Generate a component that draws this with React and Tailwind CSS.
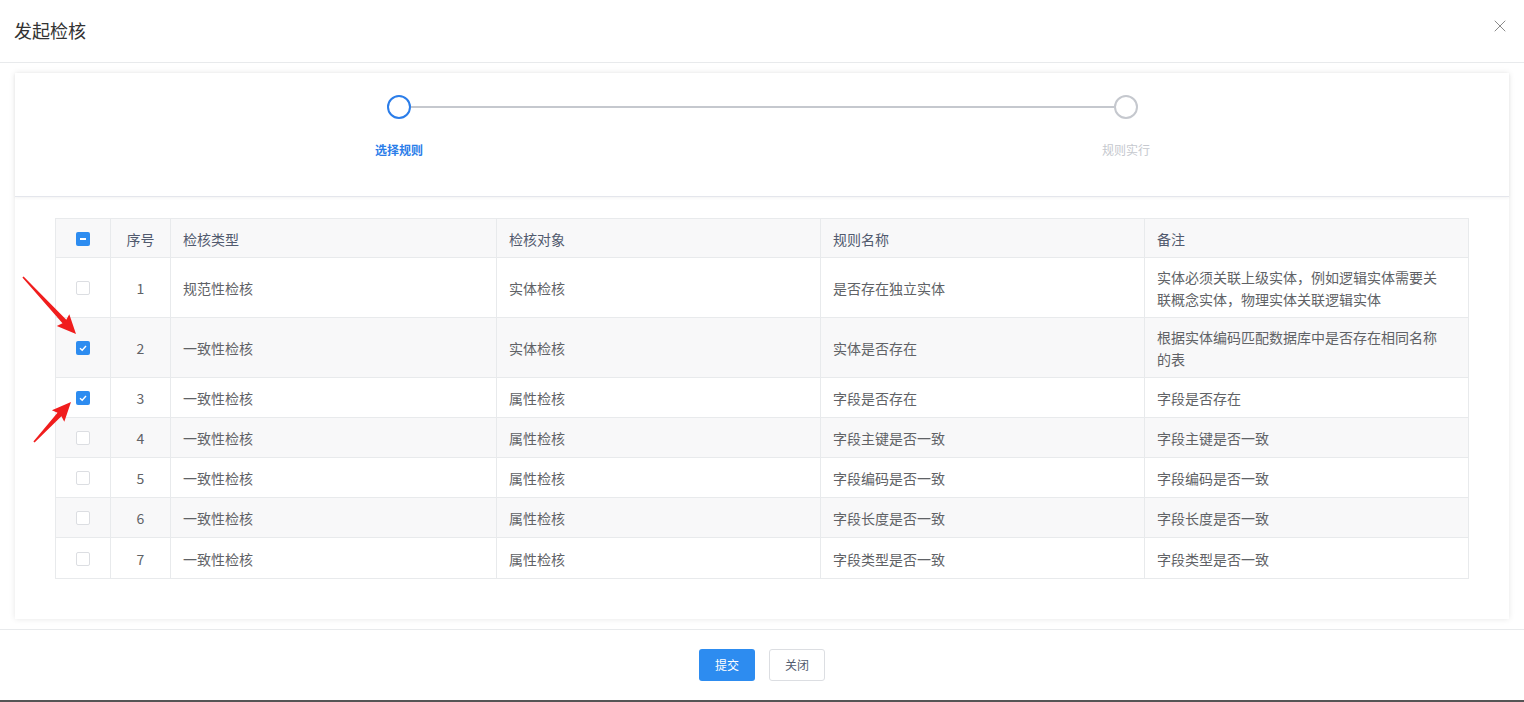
import { X } from 'lucide-react'

const FONT = { fontFamily: '"Noto Sans CJK SC", "Noto Sans", sans-serif' }

const rows = [
  { id: 1, type: '规范性检核', target: '实体检核', rule: '是否存在独立实体', note: '实体必须关联上级实体，例如逻辑实体需要关联概念实体，物理实体关联逻辑实体', checked: false },
  { id: 2, type: '一致性检核', target: '实体检核', rule: '实体是否存在', note: '根据实体编码匹配数据库中是否存在相同名称的表', checked: true },
  { id: 3, type: '一致性检核', target: '属性检核', rule: '字段是否存在', note: '字段是否存在', checked: true },
  { id: 4, type: '一致性检核', target: '属性检核', rule: '字段主键是否一致', note: '字段主键是否一致', checked: false },
  { id: 5, type: '一致性检核', target: '属性检核', rule: '字段编码是否一致', note: '字段编码是否一致', checked: false },
  { id: 6, type: '一致性检核', target: '属性检核', rule: '字段长度是否一致', note: '字段长度是否一致', checked: false },
  { id: 7, type: '一致性检核', target: '属性检核', rule: '字段类型是否一致', note: '字段类型是否一致', checked: false },
]

function Checkbox({ state }) {
  if (state === 'checked') {
    return (
      <span className="w-[14px] h-[14px] rounded-[2px] bg-[#2d8cf0] flex items-center justify-center">
        <svg width="10" height="10" viewBox="0 0 10 10">
          <polyline points="2,5.2 4.2,7.2 8,3" fill="none" stroke="#fff" strokeWidth="1.4" />
        </svg>
      </span>
    )
  }
  if (state === 'partial') {
    return (
      <span className="w-[14px] h-[14px] rounded-[2px] bg-[#2d8cf0] flex items-center justify-center">
        <span className="w-[6px] h-[2px] bg-white" />
      </span>
    )
  }
  return <span className="w-[14px] h-[14px] rounded-[2px] border border-[#dcdee2] bg-white" />
}

// tapered arrow polygon from (x1,y1) to tip (x2,y2)
function arrowPoints(x1, y1, x2, y2) {
  const len = Math.hypot(x2 - x1, y2 - y1)
  const ux = (x2 - x1) / len
  const uy = (y2 - y1) / len
  const nx = -uy
  const ny = ux
  const head = 17
  const headW = 8.5
  const shaftW = 2.6
  const bx = x2 - ux * head
  const by = y2 - uy * head
  const p = [
    [x1 + nx * 0.8, y1 + ny * 0.8],
    [bx + nx * shaftW, by + ny * shaftW],
    [bx + nx * headW - ux * 2, by + ny * headW - uy * 2],
    [x2, y2],
    [bx - nx * headW - ux * 2, by - ny * headW - uy * 2],
    [bx - nx * shaftW, by - ny * shaftW],
    [x1 - nx * 0.8, y1 - ny * 0.8],
  ]
  return p.map(([a, b]) => `${a.toFixed(1)},${b.toFixed(1)}`).join(' ')
}

const cols = [
  'w-[55px] justify-center',
  'w-[60px] justify-center',
  'w-[326px] px-3',
  'w-[324px] px-3',
  'w-[324px] px-3',
  'w-[323px] pl-3 pr-[30px]',
]

function Cell({ i, children, last }) {
  return (
    <div className={`${cols[i]} shrink-0 flex items-center pt-[8px] pb-[7px] leading-[22px] ${last ? '' : 'border-r border-[#e8eaec]'}`}>
      {children}
    </div>
  )
}

export default function App() {
  return (
    <div className="relative w-[1524px] h-[702px] bg-white flex flex-col overflow-hidden" style={FONT}>
      {/* header */}
      <div className="h-[63px] shrink-0 flex items-center justify-between pl-[14px] pr-[14px] border-b border-[#e8eaec]">
        <span className="text-[18px] text-[#333] pb-[2px]">发起检核</span>
        <X size={20} strokeWidth={1.2} className="text-[#8a8a8a] -mt-[10px]" />
      </div>

      {/* body */}
      <div className="flex-1 px-[15px] pt-[10px] pb-[10px] border-b border-[#e8eaec]">
        <div className="h-full bg-white shadow-[0_0_6px_rgba(0,0,0,0.1)] flex flex-col">
          {/* steps */}
          <div className="h-[124px] shrink-0 border-b border-[#e4e6ec] shadow-[0_1px_3px_rgba(0,0,0,0.05)] pt-[22px] pl-[372px] flex items-start">
            <div className="w-6 flex flex-col items-center">
              <span className="w-6 h-6 rounded-full border-2 border-[#2b7de9] bg-white" />
              <span className="mt-[22px] whitespace-nowrap text-[12px] font-bold text-[#2b7de9]">选择规则</span>
            </div>
            <div className="w-[703px] h-[2px] bg-[#c5c8ce] mt-[11px]" />
            <div className="w-6 flex flex-col items-center">
              <span className="w-6 h-6 rounded-full border-2 border-[#c5c8ce] bg-white" />
              <span className="mt-[22px] whitespace-nowrap text-[12px] text-[#c5c8ce]">规则实行</span>
            </div>
          </div>

          {/* table */}
          <div className="pt-[21px] pl-[40px]">
            <div className="w-[1414px] border border-[#e8eaec] text-[14px] text-[#606266]">
              <div className="flex bg-[#f8f8f9] border-b border-[#e8eaec] text-[#515a6e] min-h-[39px]">
                <Cell i={0}><Checkbox state="partial" /></Cell>
                <Cell i={1}>序号</Cell>
                <Cell i={2}>检核类型</Cell>
                <Cell i={3}>检核对象</Cell>
                <Cell i={4}>规则名称</Cell>
                <Cell i={5} last>备注</Cell>
              </div>
              {rows.map((r, idx) => (
                <div
                  key={r.id}
                  className={`flex min-h-[40px] ${idx === rows.length - 1 ? '' : 'border-b border-[#e8eaec]'} ${idx % 2 === 1 ? 'bg-[#f8f8f9]' : 'bg-white'}`}
                >
                  <Cell i={0}><Checkbox state={r.checked ? 'checked' : 'none'} /></Cell>
                  <Cell i={1}>{r.id}</Cell>
                  <Cell i={2}>{r.type}</Cell>
                  <Cell i={3}>{r.target}</Cell>
                  <Cell i={4}>{r.rule}</Cell>
                  <Cell i={5} last>{r.note}</Cell>
                </div>
              ))}
            </div>
          </div>
        </div>
      </div>

      {/* footer */}
      <div className="h-[72px] shrink-0 flex items-center justify-center gap-[14px] border-b-2 border-[#555]">
        <button className="w-[56px] h-[32px] rounded-[3px] bg-[#2d8cf0] text-white text-[12px]">提交</button>
        <button className="w-[56px] h-[32px] rounded-[3px] border border-[#dcdee2] bg-white text-[#515a6e] text-[12px]">关闭</button>
      </div>

      {/* red annotation arrows */}
      <svg className="absolute left-0 top-0 pointer-events-none" width="120" height="480">
        <polygon points={arrowPoints(23, 277, 76, 334)} fill="#f01d1d" />
        <polygon points={arrowPoints(34, 442, 71, 402)} fill="#f01d1d" />
      </svg>
    </div>
  )
}
